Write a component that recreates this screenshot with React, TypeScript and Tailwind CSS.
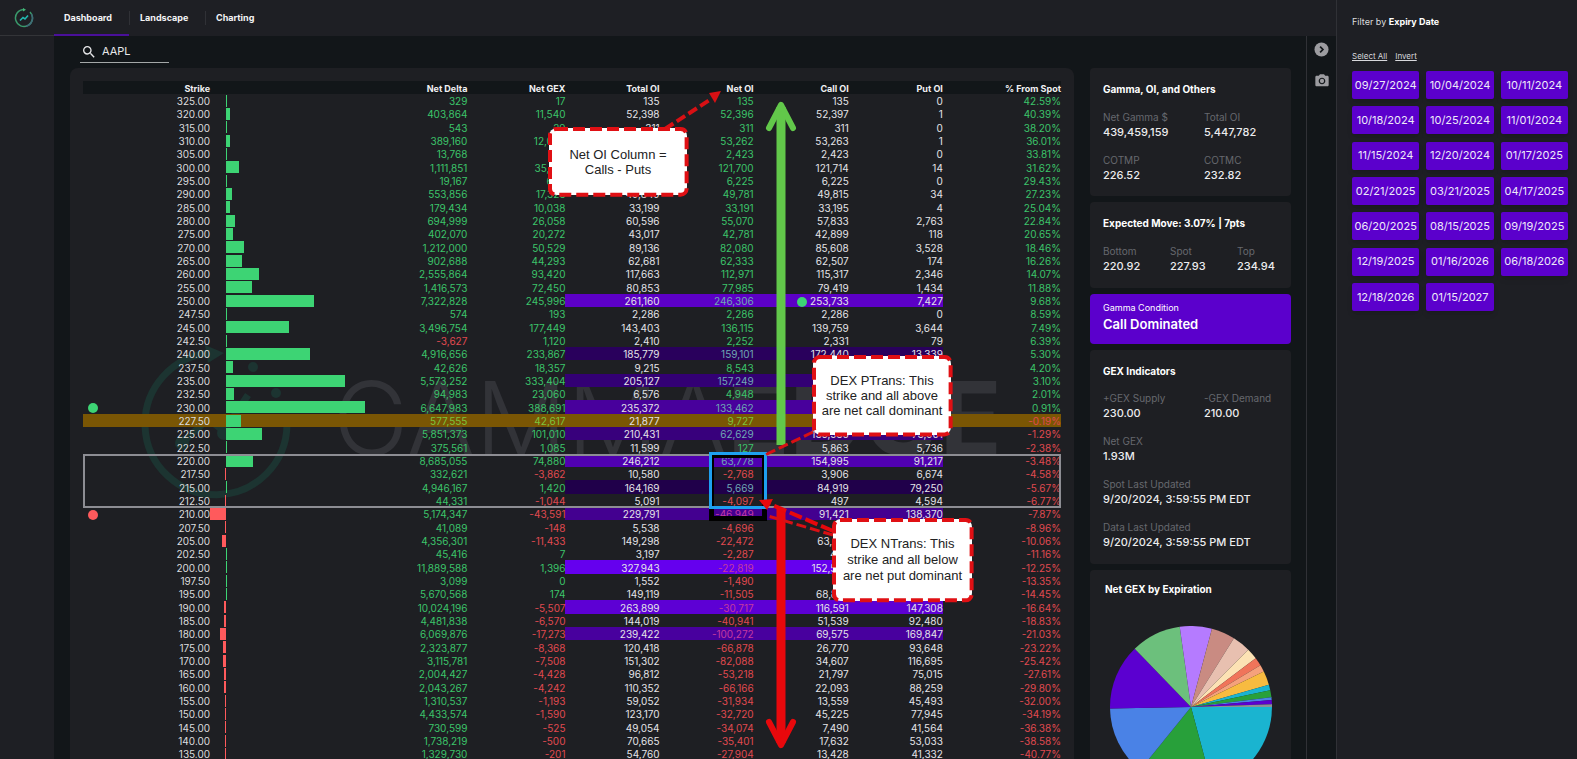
import type { ReactNode } from "react";
import { MdCameraAlt, MdSearch } from "react-icons/md";

const SPOT = 227.93;

// strike, net delta, net GEX, total OI, net OI
const strikes: [number, number, number, number, number][] = [
  [325, 329, 17, 135, 135],
  [320, 403864, 11540, 52398, 52396],
  [315, 543, 29, 311, 311],
  [310, 389160, 12045, 53264, 53262],
  [305, 13768, 512, 2423, 2423],
  [300, 1111851, 35512, 121728, 121700],
  [295, 19167, 604, 6225, 6225],
  [290, 553856, 17323, 49849, 49781],
  [285, 179434, 10038, 33199, 33191],
  [280, 694999, 26058, 60596, 55070],
  [275, 402070, 20272, 43017, 42781],
  [270, 1212000, 50529, 89136, 82080],
  [265, 902688, 44293, 62681, 62333],
  [260, 2555864, 93420, 117663, 112971],
  [255, 1416573, 72450, 80853, 77985],
  [250, 7322828, 245996, 261160, 246306],
  [247.5, 574, 193, 2286, 2286],
  [245, 3496754, 177449, 143403, 136115],
  [242.5, -3627, 1120, 2410, 2252],
  [240, 4916656, 233867, 185779, 159101],
  [237.5, 42626, 18357, 9215, 8543],
  [235, 5573252, 333404, 205127, 157249],
  [232.5, 94983, 23060, 6576, 4948],
  [230, 6647983, 388691, 235372, 133462],
  [227.5, 577555, 42617, 21877, 9727],
  [225, 5851373, 101010, 210431, 62629],
  [222.5, 375561, 1085, 11599, 127],
  [220, 8685055, 74880, 246212, 63778],
  [217.5, 332621, -3862, 10580, -2768],
  [215, 4946167, 1420, 164169, 5669],
  [212.5, 44331, -1044, 5091, -4097],
  [210, 5174347, -43591, 229791, -46949],
  [207.5, 41089, -148, 5538, -4696],
  [205, 4356301, -11433, 149298, -22472],
  [202.5, 45416, 7, 3197, -2287],
  [200, 11889588, 1396, 327943, -22819],
  [197.5, 3099, 0, 1552, -1490],
  [195, 5670568, 174, 149119, -11505],
  [190, 10024196, -5507, 263899, -30717],
  [185, 4481838, -6570, 144019, -40941],
  [180, 6069876, -17273, 239422, -100272],
  [175, 2323877, -8368, 120418, -66878],
  [170, 3115781, -7508, 151302, -82088],
  [165, 2004427, -4428, 96812, -53218],
  [160, 2043267, -4242, 110352, -66166],
  [155, 1310537, -1193, 59052, -31934],
  [150, 4433574, -1590, 123170, -32720],
  [145, 730599, -525, 49054, -34074],
  [140, 1738219, -500, 70665, -35401],
  [135, 1329730, -201, 54760, -27904],
];

// Background of the OI cells for the most active strikes
const heat: Record<number, string> = {
  250: "bg-[#5c00c6]",
  240: "bg-[#29005c]",
  235: "bg-[#330074]",
  230: "bg-[#48009c]",
  225: "bg-[#38007c]",
  220: "bg-[#5000b0]",
  215: "bg-[#20004a]",
  210: "bg-[#430090]",
  200: "bg-[#6500ee]",
  190: "bg-[#5d00d4]",
  180: "bg-[#48009e]",
};

const expiries = [
  "09/27/2024", "10/04/2024", "10/11/2024",
  "10/18/2024", "10/25/2024", "11/01/2024",
  "11/15/2024", "12/20/2024", "01/17/2025",
  "02/21/2025", "03/21/2025", "04/17/2025",
  "06/20/2025", "08/15/2025", "09/19/2025",
  "12/19/2025", "01/16/2026", "06/18/2026",
  "12/18/2026", "01/15/2027",
];

// [colour, end angle in degrees], clockwise from three o'clock
const slices: [string, number][] = [
  ["#1ab4d0", 75],
  ["#28a03a", 129],
  ["#4a82e6", 179],
  ["#5b00d0", 226],
  ["#6cc07c", 262],
  ["#b57bff", 285],
  ["#c98b82", 302],
  ["#e8c0b0", 315],
  ["#fce2b4", 323],
  ["#f0745a", 329],
  ["#f5a17c", 334],
  ["#f8bb40", 344],
  ["#1ab4d0", 348],
  ["#28a03a", 353],
  ["#4a82e6", 355],
  ["#5b00d0", 358],
  ["#8c9296", 360],
];

const fmt = (n: number) => n.toLocaleString("en-US");

function tone(n: number, hot: boolean, spot: boolean) {
  if (n < 0) return hot ? "text-[#c43aa0]" : "text-[#e04a50]";
  if (spot) return "text-[#7cc43c]";
  return hot ? "text-[#6fa8b4]" : "text-[#3cc46a]";
}

function StrikeRow({ row }: { row: [number, number, number, number, number] }) {
  const [strike, delta, gex, total, net] = row;
  const call = (total + net) / 2;
  const put = (total - net) / 2;
  const pct = (strike / SPOT - 1) * 100;
  const bg = heat[strike] ?? "";
  const hot = bg !== "";
  const spot = strike === 227.5;
  const size = Math.max(1, Math.round((Math.abs(gex) / 388691) * 139));

  return (
    <tr className={spot ? "bg-[#7a5604]" : ""}>
      <td className="pt-[2px] text-[#dcdcde]">
        <div className="flex items-center justify-end">
          {strike === 230 && <span className="ml-[5px] mr-auto size-[10px] rounded-full bg-[#3dd474]" />}
          {strike === 210 && <span className="ml-[5px] mr-auto size-[10px] rounded-full bg-[#ff5a5c]" />}
          {strike.toFixed(2)}
        </div>
      </td>
      <td>
        <div className="flex">
          <div className="flex w-4 justify-end">
            {gex < 0 && <div className="h-3 bg-[#ff5a5c]" style={{ width: size }} />}
          </div>
          {gex >= 0 && <div className="h-3 bg-[#3dd474]" style={{ width: size }} />}
        </div>
      </td>
      <td className={`pt-[2px] ${tone(delta, false, spot)}`}>{fmt(delta)}</td>
      <td className={`pt-[2px] ${tone(gex, false, spot)}`}>{fmt(gex)}</td>
      <td className={`pt-[2px] text-[#e4e4e8] ${bg}`}>{fmt(total)}</td>
      <td className={`pt-[2px] ${tone(net, hot, spot)} ${bg}`}>{fmt(net)}</td>
      <td className={`pt-[2px] text-[#e4e4e8] ${bg}`}>
        <div className="flex items-center justify-end gap-[3px]">
          {strike === 250 && <span className="size-[10px] rounded-full bg-[#3dd474]" />}
          {fmt(call)}
        </div>
      </td>
      <td className={`pt-[2px] text-[#e4e4e8] ${bg}`}>{fmt(put)}</td>
      <td className={`pt-[2px] ${tone(pct, false, false)}`}>{pct.toFixed(2)}%</td>
    </tr>
  );
}

function StrikeTable() {
  return (
    <table className="relative w-full table-fixed border-collapse text-right text-[10px] leading-[11px]">
      <colgroup>
        <col className="w-[127px]" />
        <col className="w-[163px]" />
        <col className="w-[94px]" />
        <col className="w-[98px]" />
        <col className="w-[94px]" />
        <col className="w-[94px]" />
        <col className="w-[95px]" />
        <col className="w-[94px]" />
        <col className="w-[118px]" />
      </colgroup>
      <thead>
        <tr className="h-[13px] bg-[#121619] text-[9px] text-[#f0f0f2] [&>th]:pt-px [&>th]:font-bold">
          <th>Strike</th>
          <th aria-label="GEX profile" />
          <th>Net Delta</th>
          <th>Net GEX</th>
          <th>Total OI</th>
          <th>Net OI</th>
          <th>Call OI</th>
          <th>Put OI</th>
          <th>% From Spot</th>
        </tr>
      </thead>
      <tbody className="[&>tr]:h-[13px] [&>tr:nth-child(3n)]:h-[14px]">
        {strikes.map((row) => (
          <StrikeRow key={row[0]} row={row} />
        ))}
      </tbody>
    </table>
  );
}

function Watermark() {
  return (
    <div className="absolute left-[57px] top-[264px] flex items-center gap-[39px]">
      <svg width="154" height="154" viewBox="0 0 154 154" fill="none" className="text-[#1c3431]">
        <path d="M71 8A71 71 0 1 0 147 80" stroke="currentColor" strokeWidth="7" />
        <path d="M65 0L84 8L68 18Z" fill="currentColor" />
        <path d="M42 98L68 74L84 86L108 50" stroke="currentColor" strokeWidth="7" />
        <circle cx="42" cy="98" r="7" fill="currentColor" />
        <circle cx="84" cy="88" r="7" fill="currentColor" />
        <circle cx="113" cy="22" r="5" fill="currentColor" />
        <circle cx="136" cy="48" r="5" fill="currentColor" />
      </svg>
      <span className="mb-2 text-[102px] leading-none font-light text-[#323338]">
        GAMMA<b className="font-bold">EDGE</b>
      </span>
    </div>
  );
}

function Callout({ className, children }: { className: string; children: ReactNode }) {
  return (
    <div
      className={`absolute flex items-center justify-center rounded-lg bg-white text-center font-['Liberation_Sans',Arial,sans-serif] text-[13px] text-[#222] ${className}`}
    >
      <svg className="absolute inset-0 size-full overflow-visible" fill="none">
        <rect x="1" y="1" width="99%" height="98%" rx="6" stroke="#e01014" strokeWidth="4" strokeDasharray="12 5" />
      </svg>
      <p className="relative">{children}</p>
    </div>
  );
}

function Annotations() {
  return (
    <>
      {/* Transition zone outline */}
      <div className="absolute inset-x-0 top-[373px] h-[54px] border-2 border-[#8d8d93]" />

      {/* Net OI cells inside the zone */}
      <div className="absolute left-[626px] top-[372px] h-[68px] w-[58px] border-[5px] border-black" />
      <div className="absolute left-[626px] top-[371px] h-[57px] w-[58px] border-[3px] border-[#1e9ff0]" />

      <svg className="absolute left-0 top-0 overflow-visible" width="977" height="680" fill="none">
        <g stroke="#62c84a" strokeWidth="9">
          <path d="M698 26V364" />
          <path d="M686 47L698 24L710 47" strokeWidth="6" strokeLinecap="round" strokeLinejoin="round" />
        </g>
        <g stroke="#e8080c" strokeWidth="9">
          <path d="M698 428V662" />
          <path d="M686 641L698 664L710 641" strokeWidth="6" strokeLinecap="round" strokeLinejoin="round" />
        </g>
        <g stroke="#d81014" strokeWidth="3" strokeDasharray="10 4">
          <path d="M582 48L628 18" strokeWidth="4" />
          <path d="M730 351L680 375" />
          <path d="M750 454L685 435" />
          <path d="M750 450L687 423" stroke="#e8080c" strokeWidth="4" strokeDasharray="13 4" />
        </g>
        <path d="M638 10L626 12L632 22Z" fill="#d81014" />
        <path d="M676 419L690 418L684 429Z" fill="#e8080c" />
      </svg>

      <Callout className="left-[466px] top-[47px] h-[67px] w-[138px] leading-[15px]">
        Net OI Column =<br />
        Calls - Puts
      </Callout>
      <Callout className="left-[730px] top-[275px] h-[79px] w-[138px] leading-[15px]">
        DEX PTrans: This
        <br />
        strike and all above
        <br />
        are net call dominant
      </Callout>
      <Callout className="left-[750px] top-[438px] h-[82px] w-[139px] leading-4">
        DEX NTrans: This
        <br />
        strike and all below
        <br />
        are net put dominant
      </Callout>
    </>
  );
}

function Stat({ label, value }: { label: string; value: string }) {
  return (
    <div>
      <dt className="text-[10px] leading-[15px] text-[#66686e]">{label}</dt>
      <dd className="text-[11px] leading-[15px] font-medium text-[#ececee]">{value}</dd>
    </div>
  );
}

function GexPie() {
  const point = (deg: number) => {
    const a = (deg * Math.PI) / 180;
    return `${81 + 81 * Math.cos(a)} ${81 + 81 * Math.sin(a)}`;
  };
  return (
    <svg width="162" height="162" viewBox="0 0 162 162">
      {slices.map(([color, end], i) => {
        const start = i === 0 ? 0 : slices[i - 1][1];
        return <path key={end} d={`M81 81L${point(start)}A81 81 0 0 1 ${point(end)}Z`} fill={color} />;
      })}
    </svg>
  );
}

function SummaryCards() {
  const card = "rounded-sm bg-[#1e1f23] px-[13px]";
  const title = "text-[10px] leading-4 font-bold text-white";
  return (
    <div className="flex w-[201px] shrink-0 flex-col gap-[6px]">
      <section className={`${card} h-[128px] pt-[13px]`}>
        <h2 className={title}>Gamma, OI, and Others</h2>
        <dl className="mt-[13px] grid grid-cols-[101px_1fr] gap-y-[13px]">
          <Stat label="Net Gamma $" value="439,459,159" />
          <Stat label="Total OI" value="5,447,782" />
          <Stat label="COTMP" value="226.52" />
          <Stat label="COTMC" value="232.82" />
        </dl>
      </section>

      <section className={`${card} h-[86px] pt-[13px]`}>
        <h2 className={title}>Expected Move: 3.07% | 7pts</h2>
        <dl className="mt-[13px] grid grid-cols-[67px_67px_1fr]">
          <Stat label="Bottom" value="220.92" />
          <Stat label="Spot" value="227.93" />
          <Stat label="Top" value="234.94" />
        </dl>
      </section>

      <section className="h-[50px] rounded-sm bg-[#5b00cc] px-[13px] pt-[7px] text-white">
        <p className="text-[9px] leading-[14px]">Gamma Condition</p>
        <h2 className="text-[13px] leading-[19px] font-semibold">Call Dominated</h2>
      </section>

      <section className={`${card} h-[214px] pt-[13px]`}>
        <h2 className={title}>GEX Indicators</h2>
        <dl className="mt-3 grid grid-cols-[101px_1fr] gap-y-[13px]">
          <Stat label="+GEX Supply" value="230.00" />
          <Stat label="-GEX Demand" value="210.00" />
          <div className="col-span-2">
            <Stat label="Net GEX" value="1.93M" />
          </div>
          <div className="col-span-2">
            <Stat label="Spot Last Updated" value="9/20/2024, 3:59:55 PM EDT" />
          </div>
          <div className="col-span-2">
            <Stat label="Data Last Updated" value="9/20/2024, 3:59:55 PM EDT" />
          </div>
        </dl>
      </section>

      <section className="rounded-sm bg-[#1e1f23] px-[15px] pt-[11px] pb-4">
        <h2 className={title}>Net GEX by Expiration</h2>
        <div className="mt-[29px] flex justify-center">
          <GexPie />
        </div>
      </section>
    </div>
  );
}

function TopBar() {
  return (
    <header className="flex h-9 shrink-0 items-stretch bg-[#1e1f24]">
      <a href="#" aria-label="Home" className="flex w-[54px] items-center border-b border-[#333438] pl-[14px]">
        <svg width="20" height="20" viewBox="0 0 20 20" fill="none">
          <path d="M10 1.5A8.500 8.500 0 1 0 16 4" stroke="#3a9a6c" strokeWidth="1.500" />
          <path d="M17.500 6A8.500 8.500 0 0 1 12 18.300" stroke="#3f6a78" strokeWidth="1.500" />
          <path d="M9 0L12 1.700L9 3.500Z" fill="#45b878" />
          <path d="M6 12.500L9 9.500L11 11L14 7.500" stroke="#22b8b0" strokeWidth="1.600" />
        </svg>
      </a>
      <nav className="flex items-stretch text-[9px] font-bold text-[#f4f4f6]">
        <a href="#" className="flex w-[75px] items-center border-b-2 border-[#4a109a] pt-[2px] pl-[10px]">
          Dashboard
        </a>
        <a href="#" className="my-[11px] flex w-[76px] items-center border-l border-[#303136] pl-[10px]">
          Landscape
        </a>
        <a href="#" className="my-[11px] flex w-[76px] items-center border-l border-[#303136] pl-[10px]">
          Charting
        </a>
      </nav>
    </header>
  );
}

function ExpiryFilter() {
  return (
    <aside className="w-[241px] shrink-0 border-l border-[#303136] bg-[#1e1f24] pt-[14px] pr-[9px] pl-[15px]">
      <h2 className="text-[9px] leading-4 text-[#dcdcde]">
        Filter by <b className="font-bold text-white">Expiry Date</b>
      </h2>
      <div className="mt-5 flex gap-2 text-[8px] leading-3 text-[#d8d8dc]">
        <button className="underline">Select All</button>
        <button className="underline">Invert</button>
      </div>
      <div className="mt-[9px] grid h-[240px] grid-cols-3 content-between gap-x-[7px]">
        {expiries.map((date) => (
          <button key={date} className="h-7 rounded-xs bg-[#5b00cc] text-[11px] text-[#eeeaf8] shadow-md">
            {date}
          </button>
        ))}
      </div>
    </aside>
  );
}

export default function App() {
  return (
    <div className="flex h-screen overflow-hidden bg-[#121619] font-[Inter,sans-serif]">
      <div className="flex min-w-0 flex-1 flex-col">
        <TopBar />
        <div className="flex min-h-0 flex-1">
          <div className="w-[54px] shrink-0 bg-[#1e1f24]" />

          <main className="min-w-0 flex-1 pr-[15px] pl-4">
            <label className="ml-[10px] flex h-[27px] w-[89px] items-center gap-[5px] border-b border-[#a4a8a8] pt-[5px] pl-px text-[#e8e8ea]">
              <MdSearch size={16} />
              <input aria-label="Symbol" defaultValue="AAPL" className="w-14 bg-transparent text-[11px] outline-none" />
            </label>

            <div className="mt-[5px] flex items-start gap-4">
              <div className="min-w-0 flex-1 rounded-lg bg-[#1e1f23] p-[13px]">
                <div className="relative">
                  <Watermark />
                  <StrikeTable />
                  <Annotations />
                </div>
              </div>
              <SummaryCards />
            </div>
          </main>

          <div className="flex w-[30px] shrink-0 flex-col items-center gap-4 border-l border-[#303136] pt-[6px] text-[#9c9ca0]">
            <button aria-label="Collapse panel">
              <svg width="15" height="15" viewBox="0 0 16 16" fill="none">
                <circle cx="8" cy="8" r="7.500" fill="currentColor" />
                <path d="M6.500 5L9.500 8L6.500 11" stroke="#121619" strokeWidth="1.800" />
              </svg>
            </button>
            <button aria-label="Take snapshot">
              <MdCameraAlt size={16} />
            </button>
          </div>
        </div>
      </div>
      <ExpiryFilter />
    </div>
  );
}
